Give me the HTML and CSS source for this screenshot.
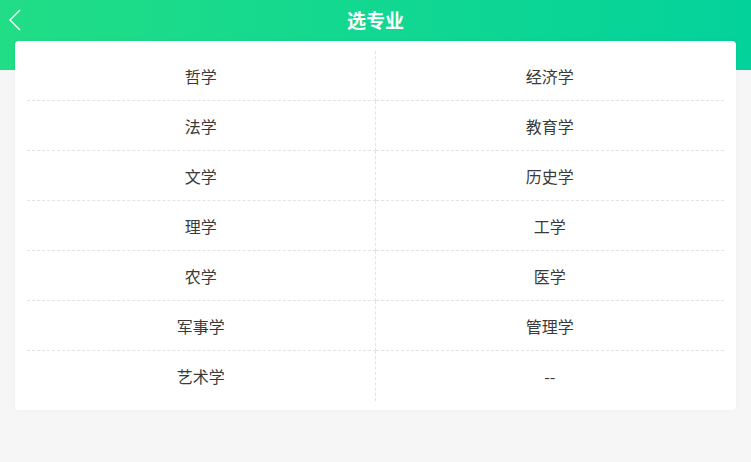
FILE: index.html
```html
<html>
<head>
    <meta name="viewport" content="width=device-width">
    <title>选专业</title>
    <link rel="stylesheet" href="styles.css">
</head>
<body>

<div class="header">
    <a class="back">
        <svg width="14" height="24" viewBox="0 0 14 24">
            <path d="M12 2 L2 12 L12 22" fill="none" stroke="#fff" stroke-width="1.4"/>
        </svg>
    </a>
    <div class="title">选专业</div>
</div>

<div class="card">
    <div class="grid">
        <div class="cell">哲学</div>
        <div class="cell">经济学</div>
        <div class="cell">法学</div>
        <div class="cell">教育学</div>
        <div class="cell">文学</div>
        <div class="cell">历史学</div>
        <div class="cell">理学</div>
        <div class="cell">工学</div>
        <div class="cell">农学</div>
        <div class="cell">医学</div>
        <div class="cell">军事学</div>
        <div class="cell">管理学</div>
        <div class="cell last">艺术学</div>
        <div class="cell last">--</div>
    </div>
</div>

</body>
</html>
```

FILE: styles.css
```css
body {
    margin: 0;
    padding: 0;
    background: #f6f6f6;
    font-family: "Noto Sans CJK SC", "Noto Sans", sans-serif;
    color: #333;
}

.header {
    position: relative;
    height: 70px;
    background: linear-gradient(90deg, #21dd86, #03d29b);
}

.back {
    position: absolute;
    left: 8px;
    top: 8px;
}

.title {
    height: 40px;
    line-height: 40px;
    text-align: center;
    color: #fff;
    font-size: 19px;
    font-weight: bold;
}

.card {
    position: relative;
    margin: -29px 15px 0;
    padding: 10px 12px 9px;
    background: #fff;
    border-radius: 4px;
    box-shadow: 0 0 4px rgba(0, 0, 0, 0.04);
}

.grid {
    display: grid;
    grid-template-columns: 1fr 1fr;
}

.cell {
    height: 49px;
    line-height: 50px;
    text-align: center;
    font-size: 16px;
    color: #3a3a3a;
    border-bottom: 1px dashed #e3e3e3;
}

.cell:nth-child(odd) {
    border-right: 1px dashed #e3e3e3;
}

.cell.last {
    border-bottom: none;
    height: 50px;
    line-height: 50px;
}
```
